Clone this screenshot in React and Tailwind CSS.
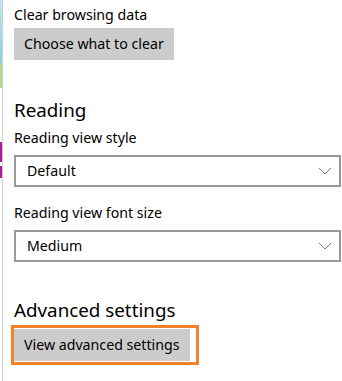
function Label({ children, className = "" }) {
  return <div className={`text-[14.2px] leading-5 text-black ${className}`}>{children}</div>;
}

function Heading({ children, className = "" }) {
  return <div className={`text-[18.8px] leading-7 text-black ${className}`}>{children}</div>;
}

function GreyButton({ children }) {
  return (
    <button className="h-8 bg-[#cccccc] px-[10px] text-[14.2px] leading-5 text-black">
      {children}
    </button>
  );
}

function Select({ value }) {
  return (
    <div className="flex h-8 items-center justify-between border-2 border-[#999999] bg-white pl-[11px] pr-[4px]">
      <span className="text-[14.2px] leading-5 text-black">{value}</span>
      <svg width="14" height="8" viewBox="0 0 14 8" className="mr-[3px]">
        <path d="M1 1 L7 7 L13 1" fill="none" stroke="#7a7a7a" strokeWidth="1" />
      </svg>
    </div>
  );
}

export default function App() {
  return (
    <div
      className="flex h-[381px] w-[342px] overflow-hidden bg-white"
      style={{ fontFamily: '"Noto Sans", "Open Sans", sans-serif' }}
    >
      {/* strip of colour left behind from the page underneath */}
      <div className="flex w-[2px] flex-col">
        <div className="h-[63px] bg-gradient-to-b from-[#bfe6ee] to-[#7fd2e2]" />
        <div className="h-[25px] bg-[#b5d98a]" />
        <div className="h-[54px]" />
        <div className="h-[20px] bg-[#b0189a]" />
        <div className="h-[4px]" />
        <div className="h-[12px] bg-[#b0189a]" />
      </div>
      <div className="w-px bg-[#cfcfcf]" />

      <div className="flex flex-1 flex-col pl-[11px] pr-[1px] pt-[5px]">
        <Label>Clear browsing data</Label>
        <div className="mt-[3px]">
          <GreyButton>Choose what to clear</GreyButton>
        </div>

        <Heading className="mt-[36px]">Reading</Heading>
        <Label className="mt-[4px]">Reading view style</Label>
        <div className="mt-[7px]">
          <Select value="Default" />
        </div>

        <Label className="mt-[16px]">Reading view font size</Label>
        <div className="mt-[7px]">
          <Select value="Medium" />
        </div>

        <Heading className="mt-[34px]">Advanced settings</Heading>
        <div className="mt-px">
          <div className="-ml-[3px] inline-flex border-[3px] border-[#f5822a] py-px pr-[6px]">
            <GreyButton>View advanced settings</GreyButton>
          </div>
        </div>
      </div>
    </div>
  );
}
